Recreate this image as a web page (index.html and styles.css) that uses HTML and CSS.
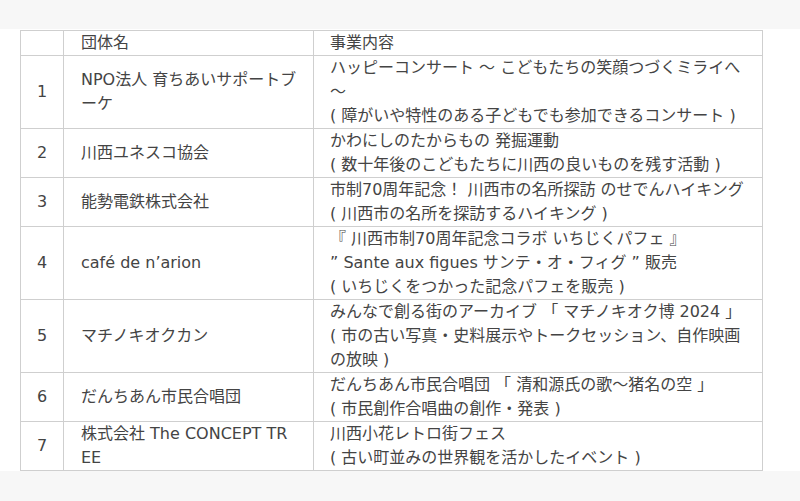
FILE: index.html
```html
<!DOCTYPE html>
<html lang="ja">
<head>
<meta charset="utf-8">
<title>団体一覧</title>
<link rel="stylesheet" href="styles.css">
</head>
<body>
<div class="top-band"></div>
<section class="content">
  <table class="list">
    <colgroup><col class="c-num"><col class="c-name"><col class="c-desc"></colgroup>
    <thead>
      <tr><th class="num"></th><th class="name">団体名</th><th class="desc">事業内容</th></tr>
    </thead>
    <tbody>
      <tr><td class="num">1</td><td class="name">NPO法人 育ちあいサポートブーケ</td><td class="desc">ハッピーコンサート 〜 こどもたちの笑顔つづくミライへ 〜<br>( 障がいや特性のある子どもでも参加できるコンサート )</td></tr>
      <tr><td class="num">2</td><td class="name">川西ユネスコ協会</td><td class="desc">かわにしのたからもの 発掘運動<br>( 数十年後のこどもたちに川西の良いものを残す活動 )</td></tr>
      <tr><td class="num">3</td><td class="name">能勢電鉄株式会社</td><td class="desc">市制70周年記念！ 川西市の名所探訪 のせでんハイキング<br>( 川西市の名所を探訪するハイキング )</td></tr>
      <tr><td class="num">4</td><td class="name">café de n’arion</td><td class="desc">『 川西市制70周年記念コラボ いちじくパフェ 』<br>” Sante aux figues サンテ・オ・フィグ ” 販売<br>( いちじくをつかった記念パフェを販売 )</td></tr>
      <tr><td class="num">5</td><td class="name">マチノキオクカン</td><td class="desc">みんなで創る街のアーカイブ 「 マチノキオク博 2024 」<br>( 市の古い写真・史料展示やトークセッション、自作映画の放映 )</td></tr>
      <tr><td class="num">6</td><td class="name">だんちあん市民合唱団</td><td class="desc">だんちあん市民合唱団 「 清和源氏の歌〜猪名の空 」<br>( 市民創作合唱曲の創作・発表 )</td></tr>
      <tr><td class="num">7</td><td class="name">株式会社 The CONCEPT TREE</td><td class="desc">川西小花レトロ街フェス<br>( 古い町並みの世界観を活かしたイベント )</td></tr>
    </tbody>
  </table>
</section>
</body>
</html>
```
FILE: styles.css
```css
html, body {
  margin: 0;
  padding: 0;
}
body {
  background: #f7f7f7;
  font-family: "DejaVu Sans", "Noto Sans CJK JP", sans-serif;
  font-size: 16px;
  line-height: 24px;
  color: #444;
  height: 501px;
  overflow: hidden;
}
.top-band {
  height: 29px;
}
.content {
  background: #fff;
  padding: 1px 0 0 20px;
}
.list {
  border-collapse: collapse;
  table-layout: fixed;
  width: 742px;
}
.c-num { width: 43px; }
.c-name { width: 250px; }
.c-desc { width: 449px; }
.list th, .list td {
  box-sizing: border-box;
  border: 1px solid #cfcfcf;
  padding: 0 16px;
  font-weight: normal;
  text-align: left;
  vertical-align: middle;
  word-break: break-all;
  overflow-wrap: anywhere;
}
.list .num {
  padding: 0;
  text-align: center;
}
.list .name {
  padding-left: 17px;
  padding-right: 16px;
}
.list .desc {
  padding-left: 16px;
  padding-right: 6px;
}
```
